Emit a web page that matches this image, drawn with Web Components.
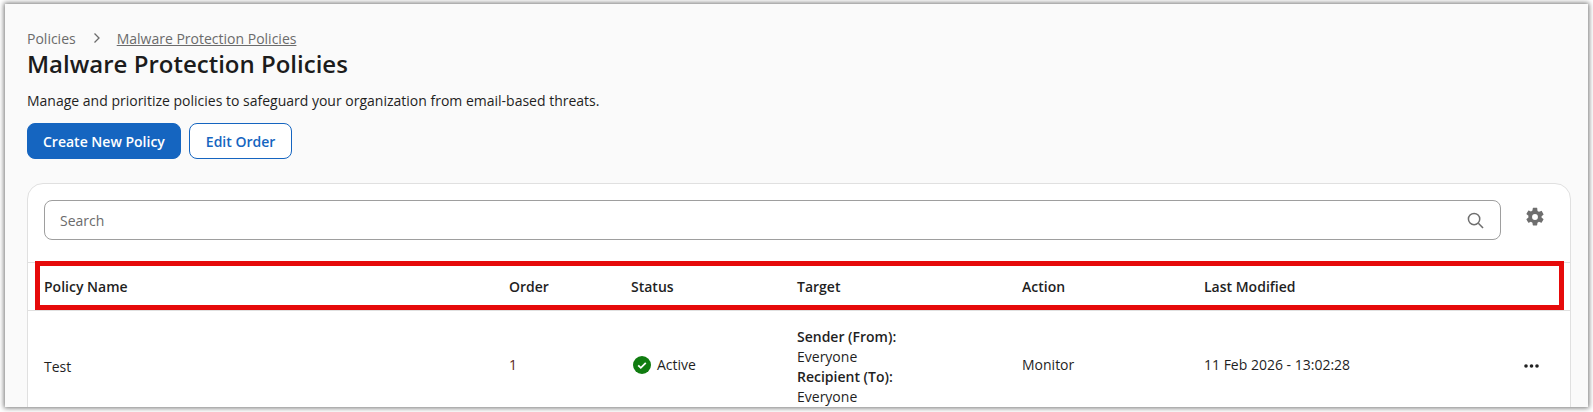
<!DOCTYPE html>
<html lang="en">
<head>
<meta charset="utf-8">
<title>Malware Protection Policies</title>
<style>
  html, body { margin: 0; height: 412px; overflow: hidden; background: #fff; }
  body { font-family: "Open Sans", "Noto Sans", sans-serif; color: #1f1f1f; }
  b { font-weight: 600; }
  .lift { padding-bottom: 4px; }
</style>
</head>
<body>
<app-window>
  <page-header>
    <bread-crumbs slot="crumbs" parent="Policies" current="Malware Protection Policies"></bread-crumbs>
    <span slot="title">Malware Protection Policies</span>
    <span slot="text">Manage and prioritize policies to safeguard your organization from email-based threats.</span>
    <ui-button slot="actions" kind="primary">Create New Policy</ui-button>
    <ui-button slot="actions">Edit Order</ui-button>
  </page-header>
  <policy-card>
    <search-bar slot="tools"></search-bar>
    <table-row head>
      <span>Policy Name</span><span>Order</span><span>Status</span><span>Target</span><span>Action</span><span>Last Modified</span><span></span>
    </table-row>
    <table-row>
      <span style="padding-top:1px">Test</span>
      <span class="lift" style="color:#5c2a1e">1</span>
      <status-badge class="lift">Active</status-badge>
      <span><b>Sender (From):</b><br>Everyone<br><b>Recipient (To):</b><br>Everyone</span>
      <span class="lift">Monitor</span>
      <span class="lift">11 Feb 2026 - 13:02:28</span>
      <row-menu style="padding-bottom:2px"></row-menu>
    </table-row>
  </policy-card>
</app-window>

<script>
class AppWindow extends HTMLElement {
  connectedCallback() {
    this.attachShadow({ mode: 'open' });
    this.shadowRoot.innerHTML = `
      <style>
        :host {
          display: block;
          box-sizing: border-box;
          height: 403px;
          margin: 4px 5px 0 5px;
          padding: 0 17px 0 22px;
          background: #fafafa;
          overflow: hidden;
          box-shadow: 0 0 5px 1px rgba(0, 0, 0, 0.55);
        }
      </style>
      <slot></slot>
    `;
  }
}

class PageHeader extends HTMLElement {
  connectedCallback() {
    this.attachShadow({ mode: 'open' });
    this.shadowRoot.innerHTML = `
      <style>
        :host {
          display: block;
          padding-top: 24px;
        }
        h1 {
          margin: 0;
          font-size: 24px;
          line-height: 32px;
          font-weight: 600;
          color: #1c1c1c;
        }
        p {
          margin: 11px 0 0;
          font-size: 14px;
          line-height: 20px;
          color: #1f1f1f;
        }
        .actions {
          display: flex;
          gap: 8px;
          margin-top: 12px;
        }
      </style>
      <slot name="crumbs"></slot>
      <h1><slot name="title"></slot></h1>
      <p><slot name="text"></slot></p>
      <div class="actions"><slot name="actions"></slot></div>
    `;
  }
}

class BreadCrumbs extends HTMLElement {
  connectedCallback() {
    this.attachShadow({ mode: 'open' });
    this.shadowRoot.innerHTML = `
      <style>
        :host {
          display: flex;
          align-items: center;
          height: 20px;
          font-size: 14px;
          color: #6b6b6b;
        }
        svg { margin: 0 15px 0 16px; }
        a { color: inherit; text-decoration: underline; }
      </style>
      <span>${this.getAttribute('parent')}</span>
      <svg width="10" height="12" viewBox="0 0 10 12" fill="none" stroke="#6b6b6b" stroke-width="1.3"><path d="M2.5 1.5 7 6l-4.500 4.500"/></svg>
      <a href="#">${this.getAttribute('current')}</a>
    `;
  }
}

class UiButton extends HTMLElement {
  connectedCallback() {
    this.attachShadow({ mode: 'open' });
    this.shadowRoot.innerHTML = `
      <style>
        :host {
          display: inline-flex;
          align-items: center;
          box-sizing: border-box;
          height: 36px;
          padding: 0 16px;
          border: 1px solid #1565c0;
          border-radius: 8px;
          background: #fff;
          color: #1565c0;
          font-size: 14px;
          font-weight: 600;
        }
        :host([kind="primary"]) {
          padding: 0 15px;
          background: #1565c0;
          color: #fff;
        }
      </style>
      <slot></slot>
    `;
  }
}

class PolicyCard extends HTMLElement {
  connectedCallback() {
    this.attachShadow({ mode: 'open' });
    this.shadowRoot.innerHTML = `
      <style>
        :host {
          display: block;
          position: relative;
          margin-top: 24px;
          background: #fff;
          border: 1px solid #e0e0e0;
          border-radius: 16px;
          height: 300px;
        }
        .tools {
          display: flex;
          align-items: center;
          padding: 16px 24px 22px 16px;
        }
        .mark {
          position: absolute;
          left: 7px;
          right: 6px;
          top: 77px;
          height: 49px;
          box-sizing: border-box;
          border: 5px solid #e60a0a;
        }
      </style>
      <div class="tools"><slot name="tools"></slot></div>
      <slot></slot>
      <div class="mark"></div>
    `;
  }
}

class SearchBar extends HTMLElement {
  connectedCallback() {
    this.attachShadow({ mode: 'open' });
    this.shadowRoot.innerHTML = `
      <style>
        :host {
          display: flex;
          align-items: center;
          gap: 23px;
          width: 100%;
        }
        .box {
          flex: 1;
          display: flex;
          align-items: center;
          justify-content: space-between;
          box-sizing: border-box;
          height: 40px;
          padding: 1px 16px 0 15px;
          border: 1px solid #9e9e9e;
          border-radius: 8px;
          font-size: 14px;
          color: #6b6b6b;
        }
        svg { display: block; }
        .gear { margin-top: -7px; }
      </style>
      <div class="box">
        <span>Search</span>
        <svg width="17" height="17" viewBox="0 0 18 18" fill="none" stroke="#6e6e6e" stroke-width="1.600"><circle cx="7.500" cy="7.500" r="6"/><path d="m12 12 5 5"/></svg>
      </div>
      <svg class="gear" width="22" height="22" viewBox="0 0 24 24" fill="#6e6e6e"><path d="M19.140 12.940c.04-.3.060-.61.060-.94s-.02-.64-.07-.94l2.030-1.580a.5.5 0 0 0 .12-.61l-1.920-3.320a.5.5 0 0 0-.59-.22l-2.390.96a7 7 0 0 0-1.620-.94l-.36-2.540A.5.500 0 0 0 13.900 2h-3.840a.5.500 0 0 0-.48.41l-.36 2.540c-.59.24-1.130.57-1.620.94l-2.390-.96a.5.500 0 0 0-.59.22L2.700 8.470a.5.500 0 0 0 .12.61l2.030 1.580c-.05.3-.09.63-.09.94s.02.64.07.94l-2.030 1.580a.5.500 0 0 0-.12.61l1.920 3.320c.12.22.37.290.59.220l2.390-.96c.5.380 1.030.7 1.620.94l.36 2.540c.05.240.240.410.48.410h3.840c.24 0 .44-.170.47-.41l.36-2.540c.59-.24 1.130-.56 1.620-.94l2.390.96c.22.080.47 0 .59-.220l1.920-3.320a.5.500 0 0 0-.12-.61l-2.010-1.580zM12 15.200A3.200 3.200 0 1 1 12 8.800a3.200 3.200 0 0 1 0 6.400z"/></svg>
    `;
  }
}

class TableRow extends HTMLElement {
  connectedCallback() {
    this.attachShadow({ mode: 'open' });
    this.shadowRoot.innerHTML = `
      <style>
        :host {
          display: grid;
          grid-template-columns: 465px 122px 166px 225px 182px 1fr 46px;
          align-items: center;
          box-sizing: border-box;
          padding: 0 0 0 16px;
          min-height: 112px;
          font-size: 14px;
          line-height: 20px;
          color: #1f1f1f;
          border-bottom: 1px solid #e0e0e0;
        }
        :host([head]) {
          min-height: 49px;
          font-weight: 600;
          border-top: 1px solid #e0e0e0;
        }
      </style>
      <slot></slot>
    `;
  }
}

class StatusBadge extends HTMLElement {
  connectedCallback() {
    this.attachShadow({ mode: 'open' });
    this.shadowRoot.innerHTML = `
      <style>
        :host {
          display: inline-flex;
          align-items: center;
          gap: 6px;
          padding-left: 2px;
        }
        svg { display: block; }
      </style>
      <svg width="18" height="18" viewBox="0 0 18 18"><circle cx="9" cy="9" r="9" fill="#107c10"/><path d="m5.200 9.300 2.600 2.500 5-5" fill="none" stroke="#fff" stroke-width="1.800"/></svg>
      <slot></slot>
    `;
  }
}

class RowMenu extends HTMLElement {
  connectedCallback() {
    this.attachShadow({ mode: 'open' });
    this.shadowRoot.innerHTML = `
      <style>
        :host { display: block; }
        svg { display: block; }
      </style>
      <svg width="15" height="4" viewBox="0 0 15 4" fill="#222"><circle cx="2" cy="2" r="1.800"/><circle cx="7.500" cy="2" r="1.800"/><circle cx="13" cy="2" r="1.800"/></svg>
    `;
  }
}

customElements.define('app-window', AppWindow);
customElements.define('page-header', PageHeader);
customElements.define('bread-crumbs', BreadCrumbs);
customElements.define('ui-button', UiButton);
customElements.define('policy-card', PolicyCard);
customElements.define('search-bar', SearchBar);
customElements.define('table-row', TableRow);
customElements.define('status-badge', StatusBadge);
customElements.define('row-menu', RowMenu);
</script>
</body>
</html>
